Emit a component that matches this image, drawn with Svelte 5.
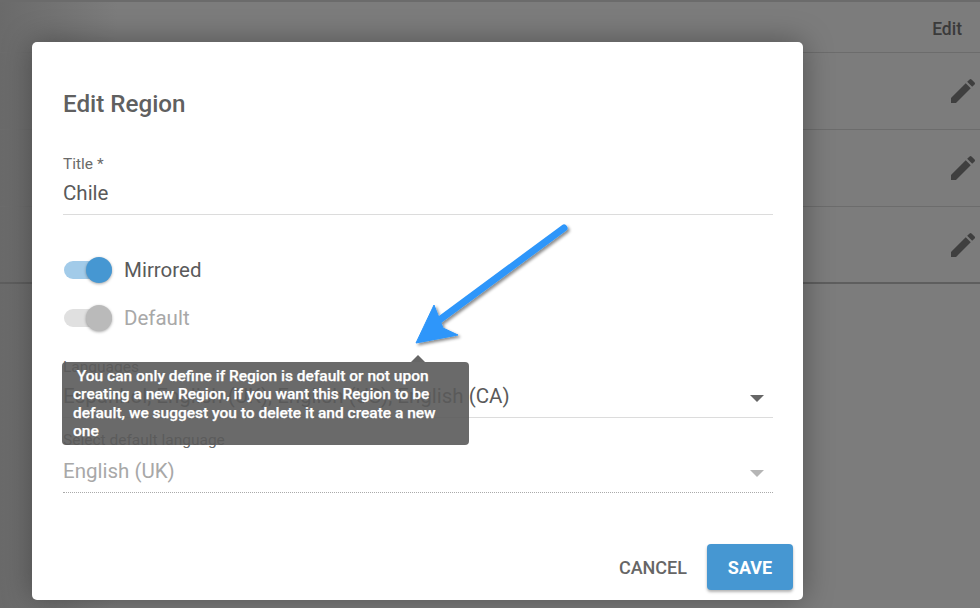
<script>
	const rows = [1, 2, 3];
</script>

<div class="page">
	<div class="table">
		<div class="head"><span>Edit</span></div>
		{#each rows as row (row)}
			<div class="row">
				<svg class="pencil" viewBox="0 0 24 24" width="32" height="32">
					<path d="M3 17.25V21h3.75L17.81 9.94l-3.75-3.75L3 17.25zM20.71 7.04a1 1 0 0 0 0-1.41l-2.34-2.34a1 1 0 0 0-1.41 0l-1.83 1.83 3.75 3.75 1.83-1.83z" />
				</svg>
			</div>
		{/each}
	</div>

	<div class="dialog">
		<h2>Edit Region</h2>

		<div class="field title">
			<label for="title">Title *</label>
			<div class="value" id="title">Chile</div>
		</div>

		<div class="switches">
			<div class="switch on">
				<span class="track"><span class="thumb"></span></span>
				<span class="name">Mirrored</span>
			</div>
			<div class="switch off">
				<span class="track"><span class="thumb"></span></span>
				<span class="name">Default</span>
			</div>
		</div>

		<div class="field select">
			<label for="langs">Languages</label>
			<div class="value" id="langs">Espanhol, English (UK), English (US), English (CA)</div>
			<span class="caret"></span>
		</div>

		<div class="field select disabled">
			<label for="def">Select default language</label>
			<div class="value" id="def">English (UK)</div>
			<span class="caret"></span>
		</div>

		<div class="actions">
			<button class="cancel">CANCEL</button>
			<button class="save">SAVE</button>
		</div>

		<div class="tooltip">
			<span class="nub"></span>
			&nbsp;You can only define if Region is default or not upon creating a new Region, if you want this Region to be default, we suggest you to delete it and create a new one
		</div>
	</div>

	<svg class="arrow" width="980" height="608" viewBox="0 0 980 608">
		<defs>
			<filter id="shadow" x="-20%" y="-20%" width="150%" height="150%">
				<feDropShadow dx="2" dy="2" stdDeviation="1.6" flood-color="#000" flood-opacity="0.45" />
			</filter>
		</defs>
		<g filter="url(#shadow)" fill="#2d96fa" stroke="#2d96fa">
			<path d="M564 228 L438 321" stroke-width="7" stroke-linecap="round" fill="none" />
			<path d="M416 343 L434 305 L443 328 L458 335 Z" stroke-width="1" />
		</g>
	</svg>
</div>

<style>
	:global(body) {
		margin: 0;
		background: #787878;
	}

	.page {
		position: relative;
		width: 980px;
		height: 608px;
		overflow: hidden;
		font-family: Roboto, sans-serif;
		color: #5f5f5f;
		background: linear-gradient(to right, #6a6a6a 0, #7c7c7c 12%, #7c7c7c 100%);
	}

	.table {
		border-top: 2px solid #6b6b6b;
	}

	.head {
		height: 51px;
		display: flex;
		align-items: center;
		justify-content: flex-end;
		padding: 4px 18px 0 0;
		box-sizing: border-box;
		border-bottom: 1px solid #6c6c6c;
		font-size: 17.5px;
		font-weight: 500;
		color: #3a3a3a;
	}

	.row {
		height: 77px;
		box-sizing: border-box;
		display: flex;
		align-items: center;
		justify-content: flex-end;
		padding-right: 1px;
		border-bottom: 1px solid #6c6c6c;
	}

	.row:last-child {
		border-bottom: 2px solid #5e5e5e;
	}

	.pencil {
		fill: #3f3f3f;
	}

	.dialog {
		position: absolute;
		left: 32px;
		top: 42px;
		width: 771px;
		height: 558px;
		box-sizing: border-box;
		padding: 48px 30px 0 31px;
		background: #fff;
		border-radius: 5px;
		box-shadow: 0 0 30px rgba(0, 0, 0, 0.35);
	}

	h2 {
		margin: 0 0 37px;
		font-size: 24.2px;
		line-height: 28px;
		font-weight: 500;
		color: #606060;
	}

	.field {
		position: relative;
		border-bottom: 1px solid #dcdcdc;
	}

	label {
		display: block;
		font-size: 15.5px;
		line-height: 18px;
		color: #6a6a6a;
	}

	.value {
		font-size: 20.5px;
		line-height: 28px;
		padding: 6px 0 7px;
		color: #5a5a5a;
		white-space: nowrap;
	}

	.switches {
		display: flex;
		flex-direction: column;
		gap: 24px;
		margin: 43px 0 28px 1px;
	}

	.switch {
		display: flex;
		align-items: center;
		gap: 12px;
		height: 24px;
		font-size: 20.5px;
		color: #5a5a5a;
	}

	.track {
		position: relative;
		width: 48px;
		height: 18px;
		border-radius: 9px;
		background: #a2cbe9;
	}

	.thumb {
		position: absolute;
		right: 0;
		top: -4px;
		width: 26px;
		height: 26px;
		border-radius: 50%;
		background: #4697d2;
		box-shadow: 0 1px 3px rgba(0, 0, 0, 0.35);
	}

	.off {
		color: #a8a8a8;
	}

	.off .track {
		background: #e0e0e0;
	}

	.off .thumb {
		background: #bababa;
	}

	.select .caret {
		position: absolute;
		right: 9px;
		bottom: 15px;
		border-left: 7px solid transparent;
		border-right: 7px solid transparent;
		border-top: 7px solid #666;
	}

	.select + .select {
		margin-top: 13px;
		border-bottom: 1px dotted #aaa;
	}

	.disabled .value {
		padding-top: 8px;
		color: #a8a8a8;
	}

	.disabled .caret {
		border-top-color: #b5b5b5;
	}

	.actions {
		position: absolute;
		right: 10px;
		bottom: 10px;
		display: flex;
		align-items: center;
		gap: 20px;
	}

	button {
		font-family: inherit;
		font-size: 18px;
		border: 0;
		background: none;
		padding: 0;
		height: 46px;
	}

	.cancel {
		font-weight: 500;
		color: #666;
	}

	.save {
		width: 86px;
		border-radius: 4px;
		font-weight: 700;
		color: #fff;
		background: #4697d2;
		box-shadow: 0 2px 3px rgba(0, 0, 0, 0.3);
	}

	.tooltip {
		position: absolute;
		left: 30px;
		top: 320px;
		width: 407px;
		height: 83px;
		box-sizing: border-box;
		padding: 5px 10px 5px 11px;
		background: rgba(90, 90, 90, 0.9);
		border-radius: 4px;
		color: #fff;
		font-size: 15.5px;
		line-height: 18.3px;
		font-weight: 500;
		-webkit-text-stroke: 0.25px #fff;
	}

	.nub {
		position: absolute;
		left: 349px;
		top: -7px;
		border-left: 7px solid transparent;
		border-right: 7px solid transparent;
		border-bottom: 7px solid #666;
	}

	.arrow {
		position: absolute;
		left: 0;
		top: 0;
		pointer-events: none;
	}
</style>
